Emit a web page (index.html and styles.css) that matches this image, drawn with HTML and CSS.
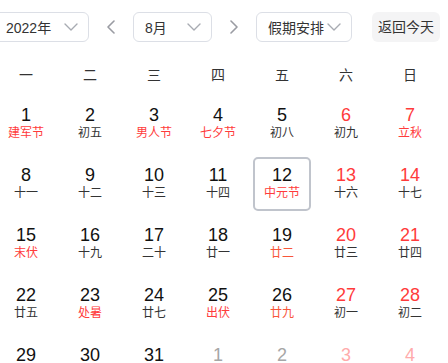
FILE: index.html
```html
<!DOCTYPE html>
<html lang="zh-CN">
<head>
    <meta charset="UTF-8">
    <title>日历</title>
    <link rel="stylesheet" href="styles.css">
</head>
<body>
    <div class="calendar">
        <div class="toolbar">
            <div class="select year">
                <span>2022年</span>
                <svg class="chevron" width="14" height="8" viewBox="0 0 14 8"><path d="M1 1l6 6 6-6" /></svg>
            </div>
            <div class="arrow">
                <svg width="8" height="14" viewBox="0 0 8 14"><path d="M7 1L1 7l6 6" /></svg>
            </div>
            <div class="select month">
                <span>8月</span>
                <svg class="chevron" width="14" height="8" viewBox="0 0 14 8"><path d="M1 1l6 6 6-6" /></svg>
            </div>
            <div class="arrow">
                <svg width="8" height="14" viewBox="0 0 8 14"><path d="M1 1l6 6-6 6" /></svg>
            </div>
            <div class="select holiday">
                <span>假期安排</span>
                <svg class="chevron" width="14" height="8" viewBox="0 0 14 8"><path d="M1 1l6 6 6-6" /></svg>
            </div>
            <div class="today-btn">返回今天</div>
        </div>

        <ul class="weekdays">
            <li>一</li><li>二</li><li>三</li><li>四</li><li>五</li><li>六</li><li>日</li>
        </ul>

        <ul class="days">
            <li><div class="cell"><b>1</b><i class="fest">建军节</i></div></li>
            <li><div class="cell"><b>2</b><i>初五</i></div></li>
            <li><div class="cell"><b>3</b><i class="fest">男人节</i></div></li>
            <li><div class="cell"><b>4</b><i class="fest">七夕节</i></div></li>
            <li><div class="cell"><b>5</b><i>初八</i></div></li>
            <li class="weekend"><div class="cell"><b>6</b><i>初九</i></div></li>
            <li class="weekend"><div class="cell"><b>7</b><i class="fest">立秋</i></div></li>

            <li><div class="cell"><b>8</b><i>十一</i></div></li>
            <li><div class="cell"><b>9</b><i>十二</i></div></li>
            <li><div class="cell"><b>10</b><i>十三</i></div></li>
            <li><div class="cell"><b>11</b><i>十四</i></div></li>
            <li class="current"><div class="cell"><b>12</b><i class="fest">中元节</i></div></li>
            <li class="weekend"><div class="cell"><b>13</b><i>十六</i></div></li>
            <li class="weekend"><div class="cell"><b>14</b><i>十七</i></div></li>

            <li><div class="cell"><b>15</b><i class="fest">末伏</i></div></li>
            <li><div class="cell"><b>16</b><i>十九</i></div></li>
            <li><div class="cell"><b>17</b><i>二十</i></div></li>
            <li><div class="cell"><b>18</b><i>廿一</i></div></li>
            <li><div class="cell"><b>19</b><i class="mark">廿二</i></div></li>
            <li class="weekend"><div class="cell"><b>20</b><i>廿三</i></div></li>
            <li class="weekend"><div class="cell"><b>21</b><i>廿四</i></div></li>

            <li><div class="cell"><b>22</b><i>廿五</i></div></li>
            <li><div class="cell"><b>23</b><i class="fest">处暑</i></div></li>
            <li><div class="cell"><b>24</b><i>廿七</i></div></li>
            <li><div class="cell"><b>25</b><i class="fest">出伏</i></div></li>
            <li><div class="cell"><b>26</b><i class="mark">廿九</i></div></li>
            <li class="weekend"><div class="cell"><b>27</b><i>初一</i></div></li>
            <li class="weekend"><div class="cell"><b>28</b><i>初二</i></div></li>

            <li><div class="cell"><b>29</b><i>初三</i></div></li>
            <li><div class="cell"><b>30</b><i>初四</i></div></li>
            <li><div class="cell"><b>31</b><i>初五</i></div></li>
            <li class="other"><div class="cell"><b>1</b><i>初六</i></div></li>
            <li class="other"><div class="cell"><b>2</b><i>初七</i></div></li>
            <li class="other weekend"><div class="cell"><b>3</b><i>初八</i></div></li>
            <li class="other weekend"><div class="cell"><b>4</b><i>初九</i></div></li>
        </ul>
    </div>
</body>
</html>
```

FILE: styles.css
```css
* {
    margin: 0;
    padding: 0;
    box-sizing: border-box;
}
body {
    overflow: hidden;
    background-color: #fff;
    font-family: "Liberation Sans", "Noto Sans CJK SC", sans-serif;
    color: #333;
}
ul {
    list-style: none;
}
.calendar {
    width: 448px;
    margin-left: -6px;
    padding-top: 12px;
}
.toolbar {
    display: flex;
    align-items: center;
    height: 30px;
}
.select {
    display: flex;
    align-items: center;
    justify-content: space-between;
    height: 30px;
    padding: 0 10px 0 11px;
    border: 1px solid #dcdfe6;
    border-radius: 6px;
    font-size: 14px;
    color: #333;
}
.select.year {
    width: 95px;
}
.select.month {
    width: 79px;
}
.select.holiday {
    width: 96px;
}
.chevron path,
.arrow path {
    fill: none;
    stroke: #a8abb2;
    stroke-width: 1.4;
    stroke-linecap: round;
    stroke-linejoin: round;
}
.arrow {
    display: flex;
    align-items: center;
    justify-content: center;
    width: 44px;
    height: 30px;
}
.arrow path {
    stroke: #9a9ca3;
    stroke-width: 1.6;
}
.today-btn {
    width: 68px;
    height: 30px;
    margin-left: 20px;
    line-height: 30px;
    text-align: center;
    font-size: 14px;
    background-color: #f4f4f5;
    border-radius: 6px;
    color: #333;
}
.weekdays {
    display: grid;
    grid-template-columns: repeat(7, 64px);
    margin-top: 17px;
    height: 32px;
    line-height: 32px;
    font-size: 14px;
    text-align: center;
    color: #333;
}
.days {
    display: grid;
    grid-template-columns: repeat(7, 64px);
    grid-auto-rows: 60px;
    margin-top: 3px;
}
.days li {
    padding: 3px;
}
.cell {
    display: flex;
    flex-direction: column;
    align-items: center;
    justify-content: center;
    height: 100%;
    border: 2px solid transparent;
    border-radius: 5px;
}
.current .cell {
    border-color: #c0c4cc;
}
.cell b {
    font-weight: normal;
    font-size: 18px;
    line-height: 20px;
    margin-top: -2px;
    color: #111;
}
.cell i {
    font-style: normal;
    font-size: 12px;
    line-height: 16px;
    color: #333;
}
.weekend .cell b {
    color: #ff3b3b;
}
.cell i.fest {
    color: #ff3b3b;
}
.cell i.mark {
    color: #f8563a;
}
.other .cell b {
    color: #a6a6a6;
}
.other.weekend .cell b {
    color: #ffabab;
}
```
